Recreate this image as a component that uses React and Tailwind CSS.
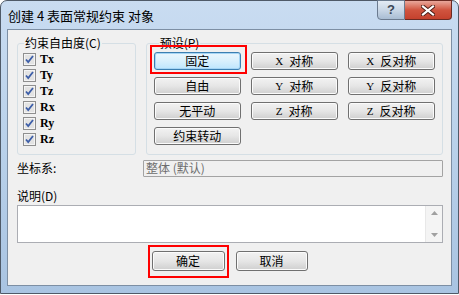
import React from 'react';

const cjk = { fontFamily: '"Noto Sans CJK SC", "Liberation Sans", sans-serif' };

const Check = () => (
  <svg width="13" height="13" viewBox="0 0 13 13" className="shrink-0">
    <rect x="0.5" y="0.5" width="12" height="12" fill="#f4f4f4" stroke="#8f8f8f" />
    <rect x="2" y="2" width="9" height="9" fill="#e3e3e3" />
    <path d="M3 6.5 L5.2 9 L10 3" fill="none" stroke="#3d5ea8" strokeWidth="1.8" />
  </svg>
);

const Btn = ({ children, focus, className = '' }) => (
  <div
    className={`h-[18px] flex items-center justify-center rounded-[3px] border text-[12px] leading-none text-black ${
      focus
        ? 'border-[#3c7fb1] bg-gradient-to-b from-[#eaf6fd] via-[#d9f0fc] to-[#bee6fd] shadow-[inset_0_0_0_1px_#a6d5f4]'
        : 'border-[#707070] bg-gradient-to-b from-[#f2f2f2] via-[#e6e6e6] to-[#cfcfcf] shadow-[inset_0_0_0_1px_#fbfbfb]'
    } ${className}`}
    style={cjk}
  >
    {children}
  </div>
);

const Axis = ({ l, t }) => (
  <span className="flex items-center gap-[6px]">
    <span className="text-[11px]" style={{ fontFamily: '"Liberation Serif", serif' }}>{l}</span>
    <span>{t}</span>
  </span>
);

export default function App() {
  const dofs = ['Tx', 'Ty', 'Tz', 'Rx', 'Ry', 'Rz'];
  return (
    <div className="w-[459px] h-[295px] bg-white">
      <div className="w-[459px] h-[294px] flex flex-col rounded-t-[7px] border border-[#4f5a68] bg-gradient-to-b from-[#c9dcf1] via-[#b9d1ea] to-[#a9c4e2] px-[6px] pb-[7px]">
        <div className="h-[28px] flex items-start justify-between">
          <div className="pt-[7px] text-[13px] leading-[16px] text-black pl-[1px]" style={cjk}>
            创建 4 表面常规约束 对象
          </div>
          <div className="flex -mt-px">
            <div className="w-[28px] h-[20px] flex items-center justify-center rounded-bl-[4px] border border-[#6b7b8f] bg-gradient-to-b from-[#e3ebf4] via-[#c9d7e6] to-[#a9bdd3] text-[13px] font-bold text-[#3b4654]" style={{ fontFamily: '"Liberation Sans", sans-serif' }}>
              ?
            </div>
            <div className="w-[47px] h-[20px] flex items-center justify-center rounded-br-[4px] border border-l-0 border-[#6b2a22] bg-gradient-to-b from-[#e8a79b] via-[#d0543f] to-[#c4412d]">
              <svg width="14" height="11" viewBox="0 0 14 11">
                <path d="M2 1.5 L12 9.5 M12 1.5 L2 9.5" stroke="#4a1c15" strokeWidth="4" strokeLinecap="square" />
                <path d="M2 1.5 L12 9.5 M12 1.5 L2 9.5" stroke="#ffffff" strokeWidth="2.2" strokeLinecap="square" />
              </svg>
            </div>
          </div>
        </div>
        <div className="flex-1 flex flex-col border border-[#7d8fa4] bg-[#f0f0f0] pl-[9px] pr-[8px] text-[12px] text-black" style={cjk}>
          <div className="flex gap-[10px] mt-[6px]">
            <fieldset className="w-[119px] h-[119px] rounded-[3px] border border-[#d5dfe5] pl-[5px]">
              <legend className="px-[1px] ml-[1px] text-[12px] leading-[14px]">约束自由度(C)</legend>
              <div className="flex flex-col pt-[1px]">
                {dofs.map((d) => (
                  <div key={d} className="h-[16px] flex items-center gap-[4px]">
                    <Check />
                    <span className="text-[12px] font-semibold" style={{ fontFamily: '"Liberation Serif", serif' }}>{d}</span>
                  </div>
                ))}
              </div>
            </fieldset>
            <fieldset className="w-[298px] h-[119px] rounded-[3px] border border-[#d5dfe5] pl-[7px]">
              <legend className="px-[1px] ml-[5px] text-[12px] leading-[14px]">预设(P)</legend>
              <div className="grid grid-cols-[87px_87px_87px] gap-x-[10px] gap-y-[7px] pt-[2px]">
                <div className="relative">
                  <Btn focus>固定</Btn>
                  <div className="absolute left-[-4px] top-[-7px] w-[97px] h-[29px] border-2 border-[#ff0000]" />
                </div>
                <Btn><Axis l="X" t="对称" /></Btn>
                <Btn><Axis l="X" t="反对称" /></Btn>
                <Btn>自由</Btn>
                <Btn><Axis l="Y" t="对称" /></Btn>
                <Btn><Axis l="Y" t="反对称" /></Btn>
                <Btn>无平动</Btn>
                <Btn><Axis l="Z" t="对称" /></Btn>
                <Btn><Axis l="Z" t="反对称" /></Btn>
                <Btn>约束转动</Btn>
              </div>
            </fieldset>
          </div>
          <div className="flex items-center mt-[5px] h-[16px]">
            <span className="w-[126px] leading-none">坐标系:</span>
            <div className="w-[300px] h-[17px] flex items-center border border-[#a3a3a3] rounded-[1px] bg-[#f0f0f0] px-[2px] text-[#6d6d6d] leading-none">
              整体 (默认)
            </div>
          </div>
          <div className="mt-[13px] leading-[14px]">说明(D)</div>
          <div className="mt-[2px] h-[38px] w-[426px] flex border border-[#abadb3] bg-white">
            <div className="flex-1" />
            <div className="w-[17px] flex flex-col items-center justify-between py-[5px] bg-[#f4f4f4] border-l border-[#e8e8e8]">
              <svg width="7" height="4" viewBox="0 0 7 4"><path d="M0 4 L3.5 0 L7 4Z" fill="#a0a0a0" /></svg>
              <svg width="7" height="4" viewBox="0 0 7 4"><path d="M0 0 L3.5 4 L7 0Z" fill="#a0a0a0" /></svg>
            </div>
          </div>
          <div className="flex justify-center gap-[11px] mt-[8px] pr-[1px]">
            <div className="relative">
              <Btn className="w-[73px] h-[20px]">确定</Btn>
              <div className="absolute left-[-4px] top-[-6px] w-[81px] h-[33px] border-2 border-[#ff0000]" />
            </div>
            <Btn className="w-[72px] h-[20px]">取消</Btn>
          </div>
        </div>
      </div>
    </div>
  );
}
